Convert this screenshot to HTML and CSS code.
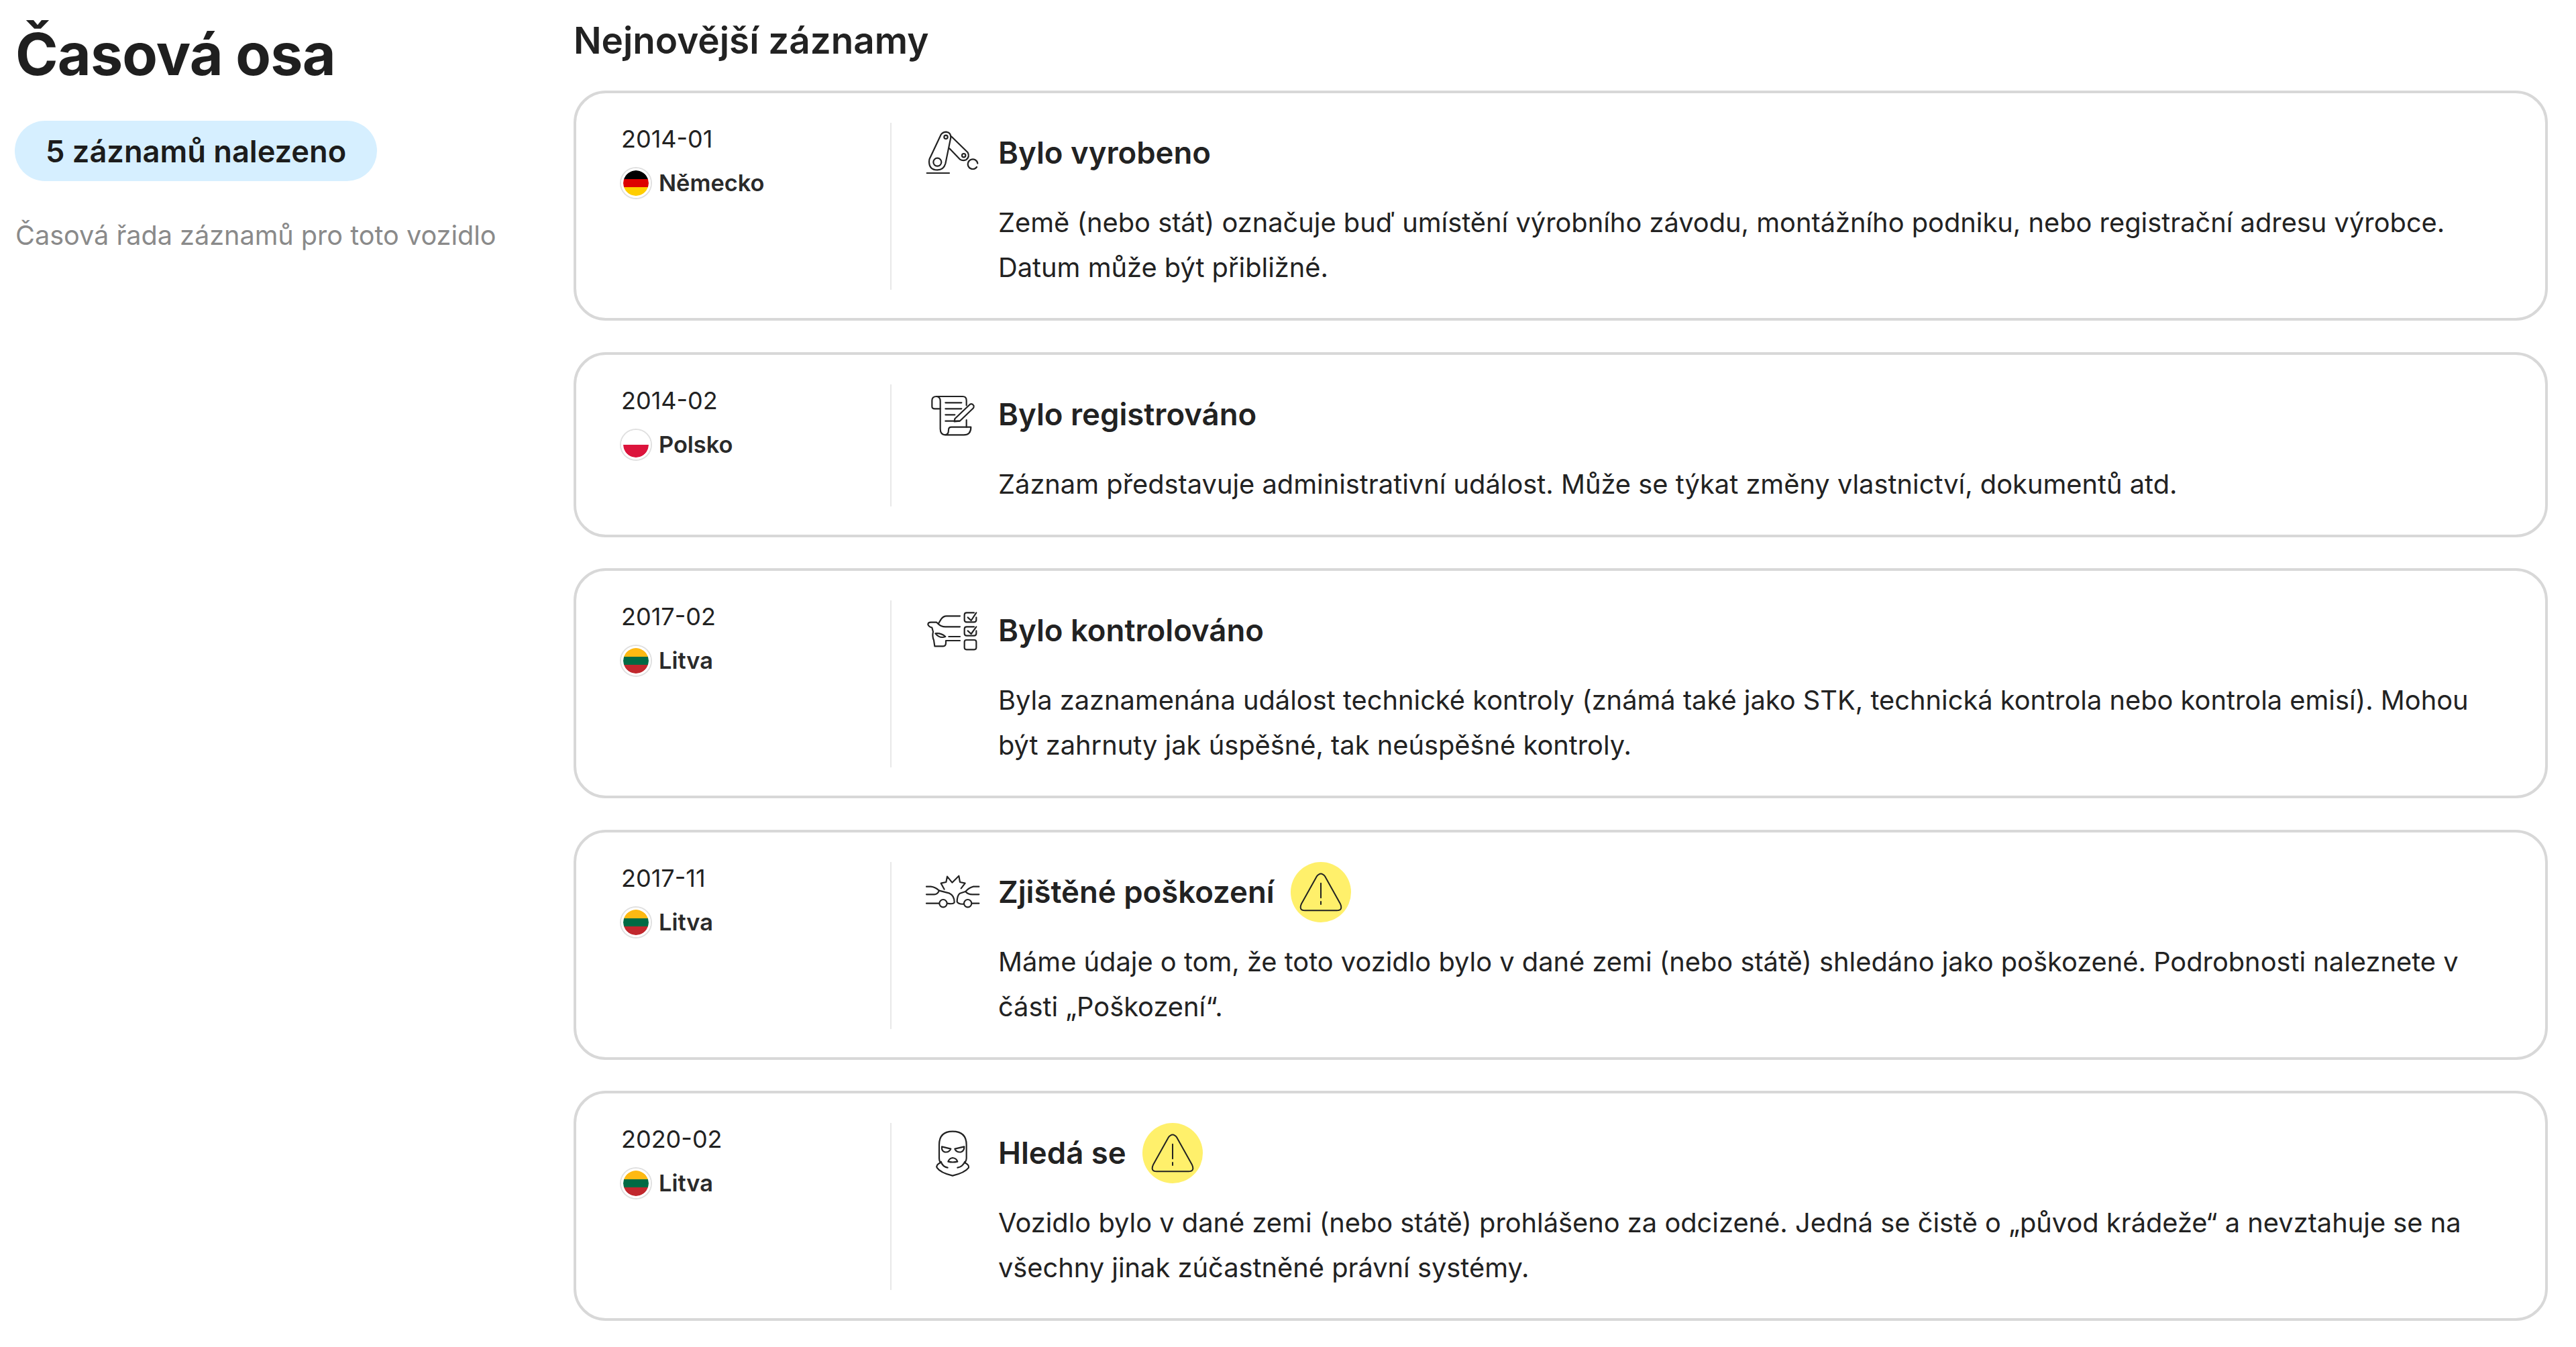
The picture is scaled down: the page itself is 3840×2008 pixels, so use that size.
FILE: index.html
```html
<!DOCTYPE html>
<html lang="cs">
<head>
<meta charset="utf-8">
<title>Časová osa</title>
<link rel="stylesheet" href="styles.css">
</head>
<body>
<svg class="defs" width="0" height="0" aria-hidden="true">
  <symbol id="warn" viewBox="1084 15 270 270">
    <path d="M1200 80Q1219 55 1238 80L1305 200Q1320 232 1290 232H1148Q1118 232 1133 200Z"/>
    <path d="M1219 110V175"/>
    <path d="M1219 192V204" class="dot"/>
  </symbol>
</svg>
<div class="page">
  <aside class="side">
    <h1 class="title">Časová osa</h1>
    <div class="pill">5 záznamů nalezeno</div>
    <p class="hint">Časová řada záznamů pro toto vozidlo</p>
  </aside>
  <main class="main">
    <h2 class="heading">Nejnovější záznamy</h2>
    <div class="list">

      <article class="card">
        <div class="meta">
          <div class="date">2014-01</div>
          <div class="country"><span class="flag de"></span>Německo</div>
        </div>
        <div class="body">
          <div class="head">
            <svg class="icon" viewBox="108 42 270 270">
              <path d="M125 267H225"/>
              <path d="M188 95Q197 83 212 83Q232 85 232 108L208 225Q200 253 172 253Q135 253 135 215Q135 205 140 197Z"/>
              <circle cx="172" cy="218" r="18"/>
              <circle cx="210" cy="106" r="8"/>
              <path d="M234 103L308 175Q318 195 300 208Q285 214 272 205L226 157"/>
              <circle cx="290" cy="188" r="8"/>
              <path d="M348 240A22 22 0 1 1 352 224"/>
            </svg>
            <h3 class="name">Bylo vyrobeno</h3>
          </div>
          <p class="text">Země (nebo stát) označuje buď umístění výrobního závodu, montážního podniku, nebo registrační adresu výrobce. Datum může být přibližné.</p>
        </div>
      </article>

      <article class="card">
        <div class="meta">
          <div class="date">2014-02</div>
          <div class="country"><span class="flag pl"></span>Polsko</div>
        </div>
        <div class="body">
          <div class="head">
            <svg class="icon" viewBox="108 6 270 270">
              <path d="M185 115H160Q148 115 148 105V78Q148 60 168 60H285Q302 60 302 78V100"/>
              <path d="M168 60Q185 62 185 80V205Q185 232 208 232H290Q322 232 322 197H235Q222 197 222 210Q222 232 205 232"/>
              <path d="M302 165V197"/>
              <path d="M208 88H280M208 115H280M208 142H250M208 170H270"/>
              <path d="M250 160L318 95Q328 90 335 102Q336 110 330 115L272 170L248 172Z"/>
            </svg>
            <h3 class="name">Bylo registrováno</h3>
          </div>
          <p class="text">Záznam představuje administrativní událost. Může se týkat změny vlastnictví, dokumentů atd.</p>
        </div>
      </article>

      <article class="card">
        <div class="meta">
          <div class="date">2017-02</div>
          <div class="country"><span class="flag lt"></span>Litva</div>
        </div>
        <div class="body">
          <div class="head">
            <svg class="icon" viewBox="0 0 270 270">
              <path d="M165 70H105Q90 70 80 85L68 105"/>
              <path d="M165 118H100Q80 118 68 105L60 98H35Q22 98 22 108Q25 118 40 122L45 140Q40 160 48 178L52 205H90Q102 205 102 190V180H165"/>
              <path d="M115 162H165"/>
              <path d="M55 148Q80 145 100 162Q75 172 55 148Z"/>
              <path d="M228 55H195Q185 55 185 65V87Q185 97 195 97H228Q238 97 238 87V76"/>
              <path d="M200 76L215 90L238 55"/>
              <path d="M228 118H195Q185 118 185 128V148Q185 158 195 158H228Q238 158 238 148V136"/>
              <path d="M200 136L215 150L238 118"/>
              <rect x="185" y="177" width="53" height="43" rx="9"/>
            </svg>
            <h3 class="name">Bylo kontrolováno</h3>
          </div>
          <p class="text">Byla zaznamenána událost technické kontroly (známá také jako STK, technická kontrola nebo kontrola emisí). Mohou být zahrnuty jak úspěšné, tak neúspěšné kontroly.</p>
        </div>
      </article>

      <article class="card">
        <div class="meta">
          <div class="date">2017-11</div>
          <div class="country"><span class="flag lt"></span>Litva</div>
        </div>
        <div class="body">
          <div class="head">
            <svg class="icon" viewBox="0 0 270 270">
              <path d="M15 110H35Q55 112 72 128L118 140Q140 150 140 180Q138 190 108 185"/>
              <path d="M15 145H50Q65 145 72 128"/>
              <path d="M15 185H72"/>
              <circle cx="90" cy="185" r="17"/>
              <circle cx="200" cy="185" r="17"/>
              <path d="M250 185H218"/>
              <path d="M250 110H225Q205 115 190 132L165 140Q152 150 152 178Q158 190 182 188"/>
              <path d="M250 145H220Q200 145 190 132"/>
              <path d="M95 122L80 95L103 90L108 65L130 92L160 62L165 90L188 95L170 118"/>
            </svg>
            <h3 class="name">Zjištěné poškození</h3>
            <svg class="warn"><use href="#warn"/></svg>
          </div>
          <p class="text">Máme údaje o tom, že toto vozidlo bylo v dané zemi (nebo státě) shledáno jako poškozené. Podrobnosti naleznete v části „Poškození“.</p>
        </div>
      </article>

      <article class="card">
        <div class="meta">
          <div class="date">2020-02</div>
          <div class="country"><span class="flag lt"></span>Litva</div>
        </div>
        <div class="body">
          <div class="head">
            <svg class="icon" viewBox="108 12 270 270">
              <path d="M185 190Q180 180 180 170V110Q180 50 240 50Q302 50 302 110V170Q302 180 295 190"/>
              <path d="M185 190Q165 200 170 212Q185 235 240 248Q295 235 312 212Q315 200 295 190"/>
              <path d="M188 185Q195 208 218 212M295 185Q285 208 262 212"/>
              <path d="M192 118L232 128Q225 145 205 142Q190 138 192 118Z"/>
              <path d="M292 118L250 128Q258 145 278 142Q292 138 292 118Z"/>
              <path d="M220 185Q225 170 240 168Q258 170 262 185Q240 190 220 185Z"/>
            </svg>
            <h3 class="name">Hledá se</h3>
            <svg class="warn"><use href="#warn"/></svg>
          </div>
          <p class="text">Vozidlo bylo v dané zemi (nebo státě) prohlášeno za odcizené. Jedná se čistě o „původ krádeže“ a nevztahuje se na všechny jinak zúčastněné právní systémy.</p>
        </div>
      </article>

    </div>
  </main>
</div>
</body>
</html>
```

FILE: styles.css
```css
* { box-sizing: border-box; }
html, body { margin: 0; padding: 0; background: #fff; }
body { font-family: Inter, "Noto Sans", sans-serif; color: #222; }
.defs { position: absolute; }
.page { display: grid; grid-template-columns: 855px 2943px; }
.side { padding: 22px 0 0 23px; }
.title { margin: 0; font-size: 86px; line-height: 118px; font-weight: 700; color: #1f1f1f; letter-spacing: -0.8px; }
.pill { display: inline-flex; align-items: center; height: 90px; margin: 40px 0 0 -1px; padding: 0 46px; border-radius: 45px; background: #d6efff; font-size: 45.2px; font-weight: 600; color: #1c1c1c; }
.hint { margin: 54px 0 0; font-size: 39.6px; line-height: 54px; color: #8a8a8a; }
.heading { margin: 0; padding-top: 26px; height: 135px; font-size: 54.8px; line-height: 68px; font-weight: 600; color: #222; }
.list { display: flex; flex-direction: column; gap: 46.6px; }
.card { display: flex; border: 4px solid #d8d8d8; border-radius: 48px; padding: 44px 0 42px 67px; }
.meta { width: 403px; flex: none; border-right: 2px solid #e8e8e8; padding-top: 2px; }
.date { font-size: 36px; line-height: 44px; color: #222; }
.country { display: flex; align-items: center; margin-top: 21px; font-size: 34.4px; line-height: 46px; font-weight: 600; color: #2a2a2a; }
.flag { width: 44px; height: 44px; flex: none; margin-right: 12px; border-radius: 50%; border: 3px solid #fff; background-clip: padding-box; box-shadow: 0 0 0 2px #e0e0e0; }
.flag.de { background-image: linear-gradient(#000 33.3%, #d00 33.3% 66.6%, #ffce00 66.6%); }
.flag.pl { background-image: linear-gradient(#fff 50%, #dc143c 50%); }
.flag.lt { background-image: linear-gradient(#fdb913 33.3%, #006a44 33.3% 66.6%, #c1272d 66.6%); }
.body { flex: 1; padding-left: 47px; padding-right: 90px; }
.head { display: flex; align-items: center; height: 90px; }
.icon { width: 90px; height: 90px; flex: none; margin-right: 22px; fill: none; stroke: #222; stroke-width: 6.5; stroke-linecap: round; stroke-linejoin: round; }
.name { margin: 0; font-size: 45.5px; line-height: 60px; font-weight: 600; color: #222; }
.warn { width: 90px; height: 90px; flex: none; margin-left: 24px; border-radius: 50%; background: #fff06b; fill: none; stroke: #222; stroke-width: 6; stroke-linecap: round; stroke-linejoin: round; }
.text { margin: 25px 0 0 112px; font-size: 39.8px; line-height: 67px; color: #222; }
```
